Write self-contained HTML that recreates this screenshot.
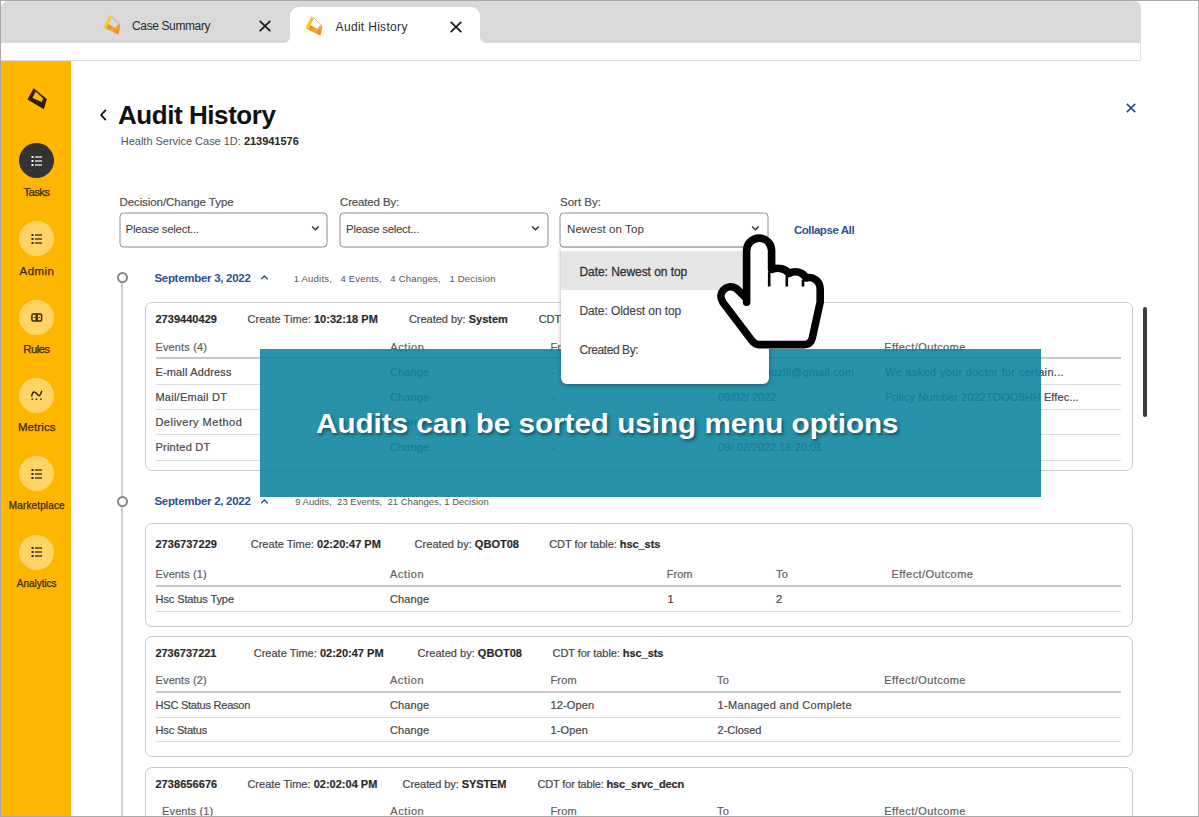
<!DOCTYPE html>
<html>
<head>
<meta charset="utf-8">
<title>Audit History</title>
<style>
*{box-sizing:border-box;margin:0;padding:0}
html,body{width:1199px;height:817px;overflow:hidden;background:#fff}
body{font-family:"Liberation Sans",sans-serif;color:#3a3a3a;position:relative;font-size:11px}
.abs{position:absolute}
.t{position:absolute;white-space:nowrap;line-height:1}
b{font-weight:700;color:#262626}
#frame{position:absolute;left:0;top:0;width:1199px;height:817px;border:1px solid #a9a9a9;z-index:50;pointer-events:none}
#tabbar{left:1px;top:1px;width:1140px;height:42px;background:#d9d9d9;border-radius:7px 7px 0 0}
#strip{left:1px;top:43px;width:1140px;height:18px;background:#fff;border-bottom:1px solid #dcdcdc;border-right:1px solid #e3e3e3}
#tab2{left:289.5px;top:7.3px;width:190.5px;height:35.7px;background:#fff;border-radius:9px 9px 0 0}
#side{left:1px;top:61px;width:70px;height:756px;background:#ffb600}
.circ{position:absolute;left:19px;width:35px;height:35px;border-radius:50%;background:#ffd466}
.circ.dark{background:#333}
.sel{position:absolute;top:213px;height:35px;border:1px solid #8c8c8c;border-radius:4px;background:#fff;transform:translate(-0.5px,-0.5px)}
.card{position:absolute;left:145px;width:988px;border:1px solid #c9c9c9;border-radius:7px;background:#fff}
.hl{position:absolute;left:156px;width:965px;height:1px;background:#dedede}
.hl.dk{background:#c8c8c8;height:1.6px}
.tl{position:absolute;left:116.5px;width:11px;height:11px;border:2px solid #868686;border-radius:50%;background:#fff}
</style>
</head>
<body>
<!-- tab bar -->
<div id="tabbar" class="abs"></div>
<div id="strip" class="abs"></div>
<div id="tab2" class="abs"></div>
<svg class="abs" style="left:100px;top:12px" width="24" height="26" viewBox="100 12 24 26"><defs><linearGradient id="lgo" x1="0" y1="0" x2="1" y2="1"><stop offset="0" stop-color="#e9771f"/><stop offset="0.5" stop-color="#f9a53a"/><stop offset="1" stop-color="#ea7422"/></linearGradient></defs>
<path d="M112 17 L120 24.8" stroke="#a9a9a9" stroke-width="0.9" fill="none"/>
<path d="M109.4 15.3 L112 17.1 L108.4 24.8 L107.3 29.3 L103.3 27.4 Z" fill="#f6c727"/>
<path d="M106.6 28.9 L108.6 24.3 L115.4 27.9 L117.9 24.2 L120.5 25.2 L118.5 34.5 Z" fill="url(#lgo)"/>
</svg>
<svg class="abs" style="left:302px;top:13px" width="24" height="26" viewBox="100 12 24 26">
<path d="M112 17 L120 24.8" stroke="#b5b5b5" stroke-width="0.9" fill="none"/>
<path d="M109.4 15.3 L112 17.1 L108.4 24.8 L107.3 29.3 L103.3 27.4 Z" fill="#f6c727"/>
<path d="M106.6 28.9 L108.6 24.3 L115.4 27.9 L117.9 24.2 L120.5 25.2 L118.5 34.5 Z" fill="url(#lgo)"/>
</svg>
<svg class="abs" style="left:283.5px;top:37px" width="6" height="6" viewBox="0 0 6 6"><path d="M6 0 V6 H0 A6 6 0 0 0 6 0 Z" fill="#fff"/></svg>
<svg class="abs" style="left:480px;top:37px" width="6" height="6" viewBox="0 0 6 6"><path d="M0 0 V6 H6 A6 6 0 0 1 0 0 Z" fill="#fff"/></svg>
<svg class="abs" style="left:258px;top:19px" width="14" height="14" viewBox="0 0 14 14"><path d="M2.2 2.4 L11.8 11.6 M11.8 2.4 L2.2 11.6" fill="none" stroke="#1a1a1a" stroke-width="1.8" stroke-linecap="round"/></svg>
<svg class="abs" style="left:449px;top:20px" width="14" height="14" viewBox="0 0 14 14"><path d="M2.2 2.4 L11.8 11.6 M11.8 2.4 L2.2 11.6" fill="none" stroke="#1a1a1a" stroke-width="1.8" stroke-linecap="round"/></svg>

<!-- sidebar -->
<div id="side" class="abs"></div>
<svg class="abs" style="left:24px;top:84px" width="28" height="28" viewBox="24 84 28 28"><path fill="#2b2100" fill-rule="evenodd" d="M33.7 88.3 L46.8 98.9 L43.9 109.3 L27.4 99.6 Z M35.7 91.6 L32.4 98 L41.7 102 L43.2 98.6 Z"/></svg>
<div class="circ dark" style="top:143px"></div>
<div class="circ" style="top:221px"></div>
<div class="circ" style="top:299.5px"></div>
<div class="circ" style="top:378px"></div>
<div class="circ" style="top:456px"></div>
<div class="circ" style="top:534.5px"></div>
<div class="t" style="left:23.50px;top:187.48px;font-size:11.5px;color:#352900;-webkit-text-stroke:0.25px #352900;letter-spacing:-0.752px">Tasks</div>
<div class="t" style="left:19.55px;top:265.78px;font-size:11.5px;color:#352900;-webkit-text-stroke:0.25px #352900;letter-spacing:0.423px">Admin</div>
<div class="t" style="left:23.30px;top:343.88px;font-size:11.5px;color:#352900;-webkit-text-stroke:0.25px #352900;letter-spacing:-0.652px">Rules</div>
<div class="t" style="left:17.90px;top:422.08px;font-size:11.5px;color:#352900;-webkit-text-stroke:0.25px #352900;letter-spacing:0.090px">Metrics</div>
<div class="t" style="left:8.75px;top:500.92px;font-size:10px;color:#352900;-webkit-text-stroke:0.25px #352900;letter-spacing:0.143px">Marketplace</div>
<div class="t" style="left:16.85px;top:578.92px;font-size:10px;color:#352900;-webkit-text-stroke:0.25px #352900;letter-spacing:-0.039px">Analytics</div>
<svg class="abs" style="left:31px;top:155px" width="12" height="12" viewBox="0 0 12 12"><g fill="#fff"><rect x="0.5" y="1" width="2" height="2"/><rect x="0.5" y="5" width="2" height="2"/><rect x="0.5" y="9" width="2" height="2"/><rect x="4" y="1.4" width="7" height="1.2"/><rect x="4" y="5.4" width="7" height="1.2"/><rect x="4" y="9.4" width="7" height="1.2"/></g></svg>
<svg class="abs" style="left:31px;top:233px" width="12" height="12" viewBox="0 0 12 12"><g fill="#2a2200"><rect x="0.5" y="1" width="2" height="2"/><rect x="0.5" y="5" width="2" height="2"/><rect x="0.5" y="9" width="2" height="2"/><rect x="4" y="1.4" width="7" height="1.2"/><rect x="4" y="5.4" width="7" height="1.2"/><rect x="4" y="9.4" width="7" height="1.2"/></g></svg>
<svg class="abs" style="left:28px;top:310px" width="18" height="16" viewBox="28 310 18 16"><g fill="none" stroke="#3a2c00" stroke-width="1.5"><path d="M36.2 313.9 H33.4 Q31.9 313.9 31.9 315.4 V319.5 Q31.9 321 33.4 321 H36.2 Z"/><path d="M37.3 313.9 H40.1 Q41.6 313.9 41.6 315.4 V319.5 Q41.6 321 40.1 321 H37.3 Z"/><path d="M33.6 317.5 H34.9 M38.7 317.5 H40" stroke-width="1.1"/></g></svg>
<svg class="abs" style="left:28px;top:386px" width="18" height="18" viewBox="28 386 18 18"><g fill="none" stroke="#2a2200" stroke-width="1.4" stroke-linecap="round"><path d="M31.7 396 Q32.6 391.4 34.6 392.1 Q36.4 392.7 37.9 394.9 Q39.8 397.3 41.7 391.3"/></g><g fill="#2a2200"><rect x="31.6" y="398.5" width="1.5" height="1.4"/><rect x="35.7" y="398.5" width="1.5" height="1.4"/><rect x="40.2" y="398.5" width="1.5" height="1.4"/></g></svg>
<svg class="abs" style="left:31px;top:468px" width="12" height="12" viewBox="0 0 12 12"><g fill="#2a2200"><rect x="0.5" y="1" width="2" height="2"/><rect x="0.5" y="5" width="2" height="2"/><rect x="0.5" y="9" width="2" height="2"/><rect x="4" y="1.4" width="7" height="1.2"/><rect x="4" y="5.4" width="7" height="1.2"/><rect x="4" y="9.4" width="7" height="1.2"/></g></svg>
<svg class="abs" style="left:31px;top:546px" width="12" height="12" viewBox="0 0 12 12"><g fill="#2a2200"><rect x="0.5" y="1" width="2" height="2"/><rect x="0.5" y="5" width="2" height="2"/><rect x="0.5" y="9" width="2" height="2"/><rect x="4" y="1.4" width="7" height="1.2"/><rect x="4" y="5.4" width="7" height="1.2"/><rect x="4" y="9.4" width="7" height="1.2"/></g></svg>

<!-- title icons -->
<svg class="abs" style="left:99px;top:108px" width="9" height="14" viewBox="0 0 9 14"><path d="M6.8 1.8 L2.2 7 L6.8 12.2" fill="none" stroke="#111" stroke-width="1.8"/></svg>
<svg class="abs" style="left:1125px;top:102px" width="12" height="12" viewBox="0 0 12 12"><path d="M1.8 1.8 L10.2 10.2 M10.2 1.8 L1.8 10.2" fill="none" stroke="#2d4f93" stroke-width="1.7"/></svg>

<!-- selects -->
<div class="sel" style="left:120px;width:208px"></div>
<div class="sel" style="left:340px;width:209px"></div>
<div class="sel" style="left:560px;width:209px"></div>
<svg class="abs" style="left:311px;top:225px" width="9" height="7" viewBox="0 0 9 7"><path d="M1.2 1.5 L4.5 4.8 L7.8 1.5" fill="none" stroke="#333" stroke-width="1.5"/></svg>
<svg class="abs" style="left:531px;top:225px" width="9" height="7" viewBox="0 0 9 7"><path d="M1.2 1.5 L4.5 4.8 L7.8 1.5" fill="none" stroke="#333" stroke-width="1.5"/></svg>
<svg class="abs" style="left:751px;top:225px" width="9" height="7" viewBox="0 0 9 7"><path d="M1.2 1.5 L4.5 4.8 L7.8 1.5" fill="none" stroke="#333" stroke-width="1.5"/></svg>

<!-- timeline -->
<div class="abs" style="left:121px;top:283px;width:2px;height:540px;background:#d0d0d0"></div>
<div class="tl" style="top:272.3px"></div>
<div class="tl" style="top:496px"></div>
<svg class="abs" style="left:259.5px;top:274px" width="9" height="7" viewBox="0 0 9 7"><path d="M1.2 5.2 L4.5 1.9 L7.8 5.2" fill="none" stroke="#2d4f93" stroke-width="1.4"/></svg>
<svg class="abs" style="left:259.5px;top:497.5px" width="9" height="7" viewBox="0 0 9 7"><path d="M1.2 5.2 L4.5 1.9 L7.8 5.2" fill="none" stroke="#2d4f93" stroke-width="1.4"/></svg>

<!-- cards -->
<div class="card" style="top:302px;height:169px"></div>
<div class="hl dk" style="top:357px"></div>
<div class="hl" style="top:384px"></div>
<div class="hl" style="top:409px"></div>
<div class="hl" style="top:434px"></div>
<div class="hl" style="top:460px"></div>
<div class="card" style="top:523px;height:104px"></div>
<div class="hl dk" style="top:585px"></div>
<div class="hl" style="top:611px"></div>
<div class="card" style="top:636px;height:121px"></div>
<div class="hl dk" style="top:691px"></div>
<div class="hl" style="top:717px"></div>
<div class="hl" style="top:741px"></div>
<div class="card" style="top:767px;height:80px"></div>

<div class="t" style="left:132.1px;top:20.14px;font-size:12px;color:#2b2b2b;letter-spacing:-0.390px">Case Summary</div>
<div class="t" style="left:335.6px;top:20.74px;font-size:12px;color:#2b2b2b;letter-spacing:0.314px">Audit History</div>
<div class="t" style="left:117.9px;top:101.90px;font-size:26px;font-weight:700;color:#111;letter-spacing:-0.428px">Audit History</div>
<div class="t" style="left:120.8px;top:135.83px;font-size:11px;color:#555;letter-spacing:-0.018px">Health Service Case 1D: <b>213941576</b></div>
<div class="t" style="left:119.4px;top:197.48px;font-size:11.5px;color:#505050;-webkit-text-stroke:0.2px #505050;letter-spacing:-0.068px">Decision/Change Type</div>
<div class="t" style="left:340.0px;top:197.48px;font-size:11.5px;color:#505050;-webkit-text-stroke:0.2px #505050;letter-spacing:-0.153px">Created By:</div>
<div class="t" style="left:560.0px;top:197.48px;font-size:11.5px;color:#505050;-webkit-text-stroke:0.2px #505050;letter-spacing:-0.001px">Sort By:</div>
<div class="t" style="left:125.6px;top:224.18px;font-size:11.5px;color:#3a3a3a;letter-spacing:-0.306px">Please select...</div>
<div class="t" style="left:346.1px;top:224.18px;font-size:11.5px;color:#3a3a3a;letter-spacing:-0.312px">Please select...</div>
<div class="t" style="left:567.0px;top:224.18px;font-size:11.5px;color:#3a3a3a;letter-spacing:0.077px">Newest on Top</div>
<div class="t" style="left:793.9px;top:224.78px;font-size:11.5px;font-weight:700;color:#2d4f93;letter-spacing:-0.428px">Collapse All</div>
<div class="t" style="left:154.4px;top:272.88px;font-size:11.5px;font-weight:700;color:#2d4f93;letter-spacing:-0.288px">September 3, 2022</div>
<div class="t" style="left:293.8px;top:273.96px;font-size:9.5px;color:#555;letter-spacing:0.195px">1 Audits,&nbsp;&nbsp; 4 Events,&nbsp;&nbsp; 4 Changes,&nbsp;&nbsp; 1 Decision</div>
<div class="t" style="left:154.4px;top:496.18px;font-size:11.5px;font-weight:700;color:#2d4f93;letter-spacing:-0.288px">September 2, 2022</div>
<div class="t" style="left:295.2px;top:497.16px;font-size:9.5px;color:#555;letter-spacing:0.017px">9 Audits,&nbsp; 23 Events,&nbsp; 21 Changes, 1 Decision</div>
<div class="t" style="left:155.4px;top:314.23px;font-size:11px;color:#454545;-webkit-text-stroke:0.2px #454545;letter-spacing:0.046px"><b>2739440429</b></div>
<div class="t" style="left:247.5px;top:314.23px;font-size:11px;color:#454545;-webkit-text-stroke:0.2px #454545;letter-spacing:0.034px">Create Time: <b>10:32:18 PM</b></div>
<div class="t" style="left:408.9px;top:314.23px;font-size:11px;color:#454545;-webkit-text-stroke:0.2px #454545;letter-spacing:-0.010px">Created by: <b>System</b></div>
<div class="t" style="left:538.7px;top:314.23px;font-size:11px;color:#454545;-webkit-text-stroke:0.2px #454545;letter-spacing:-0.053px">CDT for table: <b>hsc_sts</b></div>
<div class="t" style="left:155.4px;top:341.63px;font-size:11px;color:#5e5e5e;-webkit-text-stroke:0.2px #5e5e5e;letter-spacing:0.162px">Events (4)</div>
<div class="t" style="left:390.2px;top:341.63px;font-size:11px;color:#5e5e5e;-webkit-text-stroke:0.2px #5e5e5e;letter-spacing:0.644px">Action</div>
<div class="t" style="left:550.5px;top:341.63px;font-size:11px;color:#5e5e5e;-webkit-text-stroke:0.2px #5e5e5e;letter-spacing:0.143px">From</div>
<div class="t" style="left:884.3px;top:341.63px;font-size:11px;color:#5e5e5e;-webkit-text-stroke:0.2px #5e5e5e;letter-spacing:0.415px">Effect/Outcome</div>
<div class="t" style="left:155.4px;top:366.93px;font-size:11px;color:#454545;-webkit-text-stroke:0.2px #454545;letter-spacing:0.163px">E-mall Address</div>
<div class="t" style="left:390.0px;top:366.93px;font-size:11px;color:#454545;-webkit-text-stroke:0.2px #454545;letter-spacing:0.111px">Change</div>
<div class="t" style="left:550.6px;top:366.93px;font-size:11px;color:#454545;-webkit-text-stroke:0.2px #454545">-</div>
<div class="t" style="left:718.2px;top:366.93px;font-size:11px;color:#454545;-webkit-text-stroke:0.2px #454545;letter-spacing:0.195px">jennifer.bouzill@gmail.com</div>
<div class="t" style="left:885.2px;top:366.93px;font-size:11px;color:#454545;-webkit-text-stroke:0.2px #454545;letter-spacing:0.308px">We asked your doctor for certain...</div>
<div class="t" style="left:155.4px;top:392.03px;font-size:11px;color:#454545;-webkit-text-stroke:0.2px #454545;letter-spacing:0.262px">Mail/Email DT</div>
<div class="t" style="left:390.0px;top:392.03px;font-size:11px;color:#454545;-webkit-text-stroke:0.2px #454545;letter-spacing:0.111px">Change</div>
<div class="t" style="left:550.6px;top:392.03px;font-size:11px;color:#454545;-webkit-text-stroke:0.2px #454545">-</div>
<div class="t" style="left:718.2px;top:392.03px;font-size:11px;color:#454545;-webkit-text-stroke:0.2px #454545;letter-spacing:0.008px">09/02/ 2022</div>
<div class="t" style="left:885.2px;top:392.03px;font-size:11px;color:#454545;-webkit-text-stroke:0.2px #454545;letter-spacing:0.093px">Policy Number 2022TOOO9HH Effec...</div>
<div class="t" style="left:155.4px;top:417.03px;font-size:11px;color:#454545;-webkit-text-stroke:0.2px #454545;letter-spacing:0.494px">Delivery Method</div>
<div class="t" style="left:390.0px;top:417.03px;font-size:11px;color:#454545;-webkit-text-stroke:0.2px #454545;letter-spacing:0.111px">Change</div>
<div class="t" style="left:550.6px;top:417.03px;font-size:11px;color:#454545;-webkit-text-stroke:0.2px #454545">-</div>
<div class="t" style="left:155.4px;top:442.33px;font-size:11px;color:#454545;-webkit-text-stroke:0.2px #454545;letter-spacing:0.258px">Printed DT</div>
<div class="t" style="left:390.0px;top:442.33px;font-size:11px;color:#454545;-webkit-text-stroke:0.2px #454545;letter-spacing:0.111px">Change</div>
<div class="t" style="left:550.6px;top:442.33px;font-size:11px;color:#454545;-webkit-text-stroke:0.2px #454545">-</div>
<div class="t" style="left:718.2px;top:442.33px;font-size:11px;color:#454545;-webkit-text-stroke:0.2px #454545;letter-spacing:0.001px">09/ 02/2022 16:20:01</div>
<div class="t" style="left:155.4px;top:538.73px;font-size:11px;color:#454545;-webkit-text-stroke:0.2px #454545;letter-spacing:0.046px"><b>2736737229</b></div>
<div class="t" style="left:250.7px;top:538.73px;font-size:11px;color:#454545;-webkit-text-stroke:0.2px #454545;letter-spacing:0.025px">Create Time: <b>02:20:47 PM</b></div>
<div class="t" style="left:414.6px;top:538.73px;font-size:11px;color:#454545;-webkit-text-stroke:0.2px #454545;letter-spacing:0.027px">Created by: <b>QBOT08</b></div>
<div class="t" style="left:549.2px;top:538.73px;font-size:11px;color:#454545;-webkit-text-stroke:0.2px #454545;letter-spacing:-0.053px">CDT for table: <b>hsc_sts</b></div>
<div class="t" style="left:155.6px;top:568.63px;font-size:11px;color:#5e5e5e;-webkit-text-stroke:0.2px #5e5e5e;letter-spacing:0.107px">Events (1)</div>
<div class="t" style="left:389.9px;top:568.63px;font-size:11px;color:#5e5e5e;-webkit-text-stroke:0.2px #5e5e5e;letter-spacing:0.644px">Action</div>
<div class="t" style="left:666.8px;top:568.63px;font-size:11px;color:#5e5e5e;-webkit-text-stroke:0.2px #5e5e5e;letter-spacing:-0.024px">From</div>
<div class="t" style="left:775.9px;top:568.63px;font-size:11px;color:#5e5e5e;-webkit-text-stroke:0.2px #5e5e5e;letter-spacing:0.275px">To</div>
<div class="t" style="left:891.5px;top:568.63px;font-size:11px;color:#5e5e5e;-webkit-text-stroke:0.2px #5e5e5e;letter-spacing:0.445px">Effect/Outcome</div>
<div class="t" style="left:155.6px;top:593.83px;font-size:11px;color:#454545;-webkit-text-stroke:0.2px #454545;letter-spacing:-0.106px">Hsc Status Type</div>
<div class="t" style="left:389.9px;top:593.83px;font-size:11px;color:#454545;-webkit-text-stroke:0.2px #454545;letter-spacing:0.151px">Change</div>
<div class="t" style="left:667.4px;top:593.83px;font-size:11px;color:#454545;-webkit-text-stroke:0.2px #454545">1</div>
<div class="t" style="left:775.9px;top:593.83px;font-size:11px;color:#454545;-webkit-text-stroke:0.2px #454545">2</div>
<div class="t" style="left:155.4px;top:648.33px;font-size:11px;color:#454545;-webkit-text-stroke:0.2px #454545;letter-spacing:-0.010px"><b>2736737221</b></div>
<div class="t" style="left:253.7px;top:648.33px;font-size:11px;color:#454545;-webkit-text-stroke:0.2px #454545;letter-spacing:0.012px">Create Time: <b>02:20:47 PM</b></div>
<div class="t" style="left:417.6px;top:648.33px;font-size:11px;color:#454545;-webkit-text-stroke:0.2px #454545;letter-spacing:0.027px">Created by: <b>QBOT08</b></div>
<div class="t" style="left:552.5px;top:648.33px;font-size:11px;color:#454545;-webkit-text-stroke:0.2px #454545;letter-spacing:-0.067px">CDT for table: <b>hsc_sts</b></div>
<div class="t" style="left:155.6px;top:674.93px;font-size:11px;color:#5e5e5e;-webkit-text-stroke:0.2px #5e5e5e;letter-spacing:0.107px">Events (2)</div>
<div class="t" style="left:389.9px;top:674.93px;font-size:11px;color:#5e5e5e;-webkit-text-stroke:0.2px #5e5e5e;letter-spacing:0.644px">Action</div>
<div class="t" style="left:550.5px;top:674.93px;font-size:11px;color:#5e5e5e;-webkit-text-stroke:0.2px #5e5e5e;letter-spacing:0.143px">From</div>
<div class="t" style="left:717.1px;top:674.93px;font-size:11px;color:#5e5e5e;-webkit-text-stroke:0.2px #5e5e5e;letter-spacing:0.275px">To</div>
<div class="t" style="left:884.2px;top:674.93px;font-size:11px;color:#5e5e5e;-webkit-text-stroke:0.2px #5e5e5e;letter-spacing:0.430px">Effect/Outcome</div>
<div class="t" style="left:155.6px;top:700.13px;font-size:11px;color:#454545;-webkit-text-stroke:0.2px #454545;letter-spacing:-0.234px">HSC Status Reason</div>
<div class="t" style="left:389.9px;top:700.13px;font-size:11px;color:#454545;-webkit-text-stroke:0.2px #454545;letter-spacing:0.151px">Change</div>
<div class="t" style="left:550.5px;top:700.13px;font-size:11px;color:#454545;-webkit-text-stroke:0.2px #454545;letter-spacing:0.131px">12-Open</div>
<div class="t" style="left:717.6px;top:700.13px;font-size:11px;color:#454545;-webkit-text-stroke:0.2px #454545;letter-spacing:0.324px">1-Managed and Complete</div>
<div class="t" style="left:155.6px;top:724.83px;font-size:11px;color:#454545;-webkit-text-stroke:0.2px #454545;letter-spacing:-0.176px">Hsc Status</div>
<div class="t" style="left:389.9px;top:724.83px;font-size:11px;color:#454545;-webkit-text-stroke:0.2px #454545;letter-spacing:0.151px">Change</div>
<div class="t" style="left:550.5px;top:724.83px;font-size:11px;color:#454545;-webkit-text-stroke:0.2px #454545;letter-spacing:0.119px">1-Open</div>
<div class="t" style="left:717.6px;top:724.83px;font-size:11px;color:#454545;-webkit-text-stroke:0.2px #454545;letter-spacing:-0.019px">2-Closed</div>
<div class="t" style="left:155.4px;top:779.03px;font-size:11px;color:#454545;-webkit-text-stroke:0.2px #454545;letter-spacing:0.068px"><b>2738656676</b></div>
<div class="t" style="left:247.4px;top:779.03px;font-size:11px;color:#454545;-webkit-text-stroke:0.2px #454545;letter-spacing:0.016px">Create Time: <b>02:02:04 PM</b></div>
<div class="t" style="left:402.6px;top:779.03px;font-size:11px;color:#454545;-webkit-text-stroke:0.2px #454545;letter-spacing:-0.074px">Created by: <b>SYSTEM</b></div>
<div class="t" style="left:537.5px;top:779.03px;font-size:11px;color:#454545;-webkit-text-stroke:0.2px #454545;letter-spacing:-0.153px">CDT for table: <b>hsc_srvc_decn</b></div>
<div class="t" style="left:162.1px;top:806.03px;font-size:11px;color:#5e5e5e;-webkit-text-stroke:0.2px #5e5e5e;letter-spacing:0.107px">Events (1)</div>
<div class="t" style="left:390.3px;top:806.03px;font-size:11px;color:#5e5e5e;-webkit-text-stroke:0.2px #5e5e5e;letter-spacing:0.564px">Action</div>
<div class="t" style="left:550.5px;top:806.03px;font-size:11px;color:#5e5e5e;-webkit-text-stroke:0.2px #5e5e5e;letter-spacing:0.143px">From</div>
<div class="t" style="left:717.1px;top:806.03px;font-size:11px;color:#5e5e5e;-webkit-text-stroke:0.2px #5e5e5e;letter-spacing:0.275px">To</div>
<div class="t" style="left:884.2px;top:806.03px;font-size:11px;color:#5e5e5e;-webkit-text-stroke:0.2px #5e5e5e;letter-spacing:0.430px">Effect/Outcome</div>

<!-- scrollbar -->
<div class="abs" style="left:1143px;top:307px;width:4px;height:110px;background:#3a3a3a;border-radius:2px"></div>

<!-- teal overlay -->
<div class="abs" style="left:260px;top:348.7px;width:781px;height:148.3px;background:rgba(11,132,158,0.885)"></div>
<div class="t" style="left:316.2px;top:410.8px;font-size:27px;font-weight:700;color:#fff;transform:scaleX(1.097);transform-origin:0 0;text-shadow:1.5px 2px 3px rgba(0,40,55,0.6)">Audits can be sorted using menu options</div>

<!-- dropdown menu -->
<div class="abs" style="left:561px;top:248px;width:208px;height:135.6px;background:#fff;border-radius:0 0 6px 6px;box-shadow:0 1px 4px rgba(0,0,0,0.35)"></div>
<div class="abs" style="left:561px;top:251px;width:208px;height:39px;background:#e6e6e6"></div>
<div class="t" style="left:579.4px;top:265.84px;font-size:12px;color:#333;-webkit-text-stroke:0.3px #333;letter-spacing:-0.046px">Date: Newest on top</div>
<div class="t" style="left:579.4px;top:304.84px;font-size:12px;color:#444;-webkit-text-stroke:0.15px #444;letter-spacing:-0.084px">Date: Oldest on top</div>
<div class="t" style="left:579.4px;top:343.94px;font-size:12px;color:#444;-webkit-text-stroke:0.15px #444;letter-spacing:-0.417px">Created By:</div>

<!-- hand cursor -->
<svg class="abs" style="left:710px;top:225px" width="125" height="130" viewBox="710 225 125 130">
<path d="M746.6 302.3 L746.6 250.6 A12.5 12.5 0 0 1 771.6 250.6 L771.6 269.5 C778 267 786 268.5 789 273.5 C795 270 803 272 806 278 C813 276 820.2 281 820.2 289 L820.2 302 L812.3 338 C811.3 342.5 808 344.6 804 344.6 L759 344.6 C756 344.6 754 343.4 752 340.8 L723 302.5 C716.5 293 726.5 282.8 736.3 288.6 L746.6 298.5 Z" fill="#fff" stroke="#000" stroke-width="7.6" stroke-linejoin="round" stroke-linecap="round"/>
<path d="M769.2 272 V286.5 M786.8 276 V286.5 M803 280 V286.5" fill="none" stroke="#000" stroke-width="2.6" stroke-linecap="butt"/>
</svg>

<div id="frame"></div>
</body>
</html>
